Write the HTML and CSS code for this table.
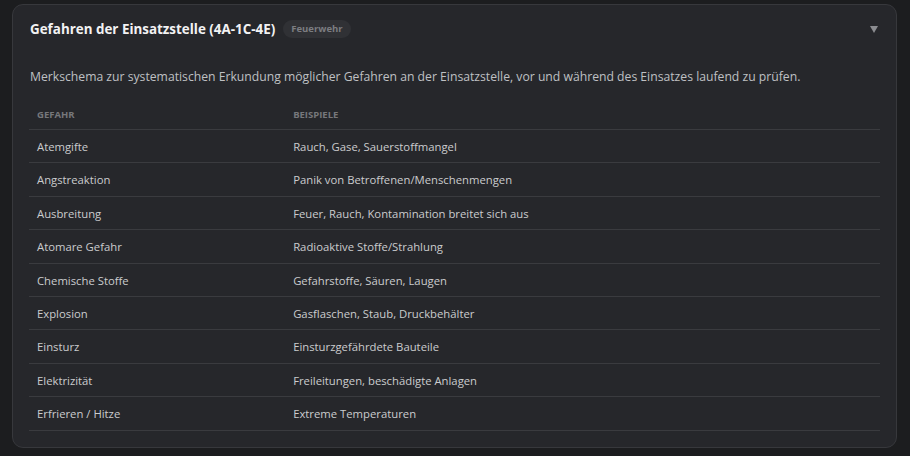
FILE: index.html
```html
<!DOCTYPE html>
<html lang="de">
<head>
<meta charset="utf-8">
<link rel="stylesheet" href="styles.css">
</head>
<body>
<section class="card">
  <header class="card-head">
    <div class="title-wrap">
      <h2 class="title">Gefahren der Einsatzstelle (4A-1C-4E)</h2>
      <span class="badge">Feuerwehr</span>
    </div>
    <svg class="chevron" width="8" height="7" viewBox="0 0 8 7"><polygon points="0,0 8,0 4,7" fill="#8b8c90"/></svg>
  </header>
  <div class="card-body">
    <p class="desc">Merkschema zur systematischen Erkundung möglicher Gefahren an der Einsatzstelle, vor und während des Einsatzes laufend zu prüfen.</p>
    <table class="tbl">
      <thead>
        <tr><th class="c1">Gefahr</th><th>Beispiele</th></tr>
      </thead>
      <tbody>
        <tr><td>Atemgifte</td><td>Rauch, Gase, Sauerstoffmangel</td></tr>
        <tr><td>Angstreaktion</td><td>Panik von Betroffenen/Menschenmengen</td></tr>
        <tr><td>Ausbreitung</td><td>Feuer, Rauch, Kontamination breitet sich aus</td></tr>
        <tr><td>Atomare Gefahr</td><td>Radioaktive Stoffe/Strahlung</td></tr>
        <tr><td>Chemische Stoffe</td><td>Gefahrstoffe, Säuren, Laugen</td></tr>
        <tr><td>Explosion</td><td>Gasflaschen, Staub, Druckbehälter</td></tr>
        <tr><td>Einsturz</td><td>Einsturzgefährdete Bauteile</td></tr>
        <tr><td>Elektrizität</td><td>Freileitungen, beschädigte Anlagen</td></tr>
        <tr><td>Erfrieren / Hitze</td><td>Extreme Temperaturen</td></tr>
      </tbody>
    </table>
  </div>
</section>
</body>
</html>
```
FILE: styles.css
```css
html, body {
  margin: 0;
  background: #1c1d1f;
}
body {
  padding: 4px 13px 10px 12px;
  font-family: "Open Sans", "Noto Sans", sans-serif;
  color: #c9cacd;
}
.card {
  background: #26272b;
  border: 1px solid #37383c;
  border-radius: 11px;
  padding-bottom: 16px;
}
.card-head {
  display: flex;
  align-items: center;
  justify-content: space-between;
  padding: 15px 17px 15px 17px;
}
.title-wrap {
  display: flex;
  align-items: center;
  gap: 8px;
}
.title {
  margin: 0;
  font-size: 13.4px;
  font-weight: 700;
  color: #f2f2f3;
  line-height: 18px;
}
.badge {
  font-size: 9.5px;
  font-weight: 700;
  color: #7c7d81;
  background: #303135;
  border-radius: 9px;
  padding: 0 8px;
  line-height: 18px;
  height: 18px;
}
.chevron {
  display: block;
  margin-right: 1px;
}
.card-body {
  padding: 0 16px 0 16px;
}
.desc {
  margin: 14px 0 11px 1px;
  font-size: 12.2px;
  line-height: 20px;
  color: #bfc0c3;
}
.tbl {
  width: 100%;
  border-collapse: collapse;
}
.tbl th {
  text-align: left;
  font-size: 9.5px;
  font-weight: 700;
  text-transform: uppercase;
  color: #76777b;
  padding: 11px 8px 8px;
  line-height: 12px;
  border-bottom: 1px solid #3a3b3f;
}
.tbl th.c1 {
  width: 30.1%;
}
.tbl td {
  font-size: 11.3px;
  color: #cbccce;
  padding: 8px 8px 6px;
  line-height: 18.4px;
  border-bottom: 1px solid #3a3b3f;
}
```
